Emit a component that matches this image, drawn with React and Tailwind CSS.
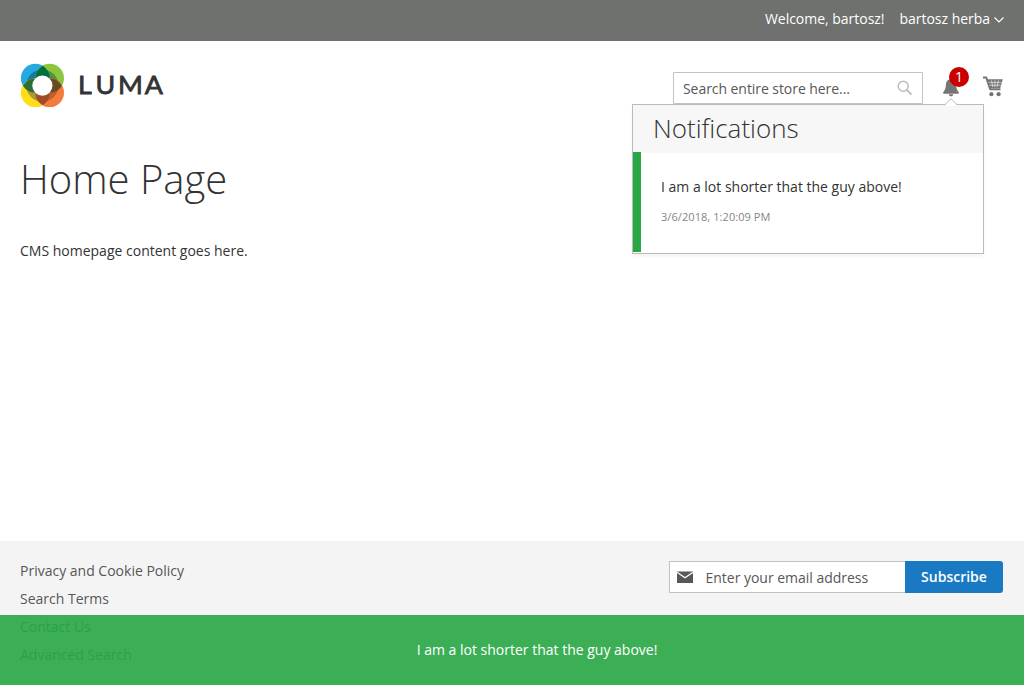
const footerLinks = ['Privacy and Cookie Policy', 'Search Terms', 'Contact Us', 'Advanced Search'];

function Logo() {
  return (
    <svg className="block" width="150" height="46" viewBox="20 62 150 46" aria-label="LUMA">
      <defs>
        <clipPath id="tl"><circle cx="35.3" cy="78.2" r="14.4" /></clipPath>
        <clipPath id="tr"><circle cx="49.6" cy="78.2" r="14.4" /></clipPath>
        <clipPath id="bl"><circle cx="35.3" cy="92.7" r="14.4" /></clipPath>
        <clipPath id="br"><circle cx="49.6" cy="92.7" r="14.4" /></clipPath>
      </defs>
      <circle cx="35.3" cy="78.2" r="14.4" fill="#26a9e0" />
      <circle cx="49.6" cy="78.2" r="14.4" fill="#8cc63e" />
      <circle cx="35.3" cy="92.7" r="14.4" fill="#ffde17" />
      <circle cx="49.6" cy="92.7" r="14.4" fill="#f47b3b" />
      <circle cx="42.4" cy="85.6" r="16.2" clipPath="url(#tl)" fill="#1478a5" />
      <circle cx="42.4" cy="85.6" r="16.2" clipPath="url(#tr)" fill="#5b8d3e" />
      <circle cx="42.4" cy="85.6" r="16.2" clipPath="url(#bl)" fill="#ab9a31" />
      <circle cx="42.4" cy="85.6" r="16.2" clipPath="url(#br)" fill="#c0602f" />
      <g strokeWidth=".5" stroke="#ffffff" strokeOpacity=".25">
        <g clipPath="url(#tl)"><circle cx="49.6" cy="78.2" r="14.4" clipPath="url(#tr)" fill="#00703c" /></g>
        <g clipPath="url(#bl)"><circle cx="49.6" cy="92.7" r="14.4" clipPath="url(#br)" fill="#a04b24" /></g>
        <g clipPath="url(#tl)"><circle cx="35.3" cy="92.7" r="14.4" clipPath="url(#bl)" fill="#2f6d35" /></g>
        <g clipPath="url(#tr)"><circle cx="49.6" cy="92.7" r="14.4" clipPath="url(#br)" fill="#664c22" /></g>
      </g>
      <circle cx="42.4" cy="85.6" r="10.1" fill="#fff" />
      <text transform="scale(1.05 1)" x="74.3 90.9 112.4 137.8" y="94.3" fontFamily="Lato, sans-serif" fontWeight="400" fontSize="25.5" fill="#333" stroke="#333" strokeWidth=".8">LUMA</text>
    </svg>
  );
}

function SearchIcon() {
  return (
    <svg width="16" height="16" viewBox="0 0 16 16" fill="none" stroke="#bcbcbc">
      <circle cx="6.2" cy="6.3" r="5" strokeWidth="1.5" />
      <path d="M9.8 9.9 14.5 14.6" strokeWidth="2" />
    </svg>
  );
}

function BellIcon() {
  return (
    <svg className="block" width="16" height="19" viewBox="0 0 16 19" fill="#757575">
      <path d="M8 0C6.9 0 6.4.7 6.4 1.6 4 2.2 3 4.2 2.9 6.8 2.8 10.5 2 12.2.4 13.9c-.7.8-.3 1.8.4 1.8h14.4c.7 0 1.1-1 .4-1.8-1.6-1.7-2.4-3.400-2.500-7.100C13 4.200 12 2.200 9.600 1.600 9.600.7 9.100 0 8 0Z" />
      <path d="M5.9 16.2h4.2c0 1.300-.9 2.100-2.100 2.100s-2.100-.8-2.100-2.100Z" />
    </svg>
  );
}

function CartIcon() {
  return (
    <svg className="block" width="20" height="21" viewBox="0 0 20 21">
      <path d="M0 1.5h3.200l4 11.800h10.300" fill="none" stroke="#757575" strokeWidth="2" />
      <path d="M4 3.300h15.800l-2.500 8.600H6.700Z" fill="#757575" />
      <path d="M5.500 6.400h13M6.200 9.200h11.500M8.500 4.300l1.300 6.900M11.900 4.300v6.900M15.400 4.300 14.100 11.200" stroke="#fff" strokeWidth=".6" fill="none" />
      <circle cx="8.4" cy="18.2" r="2.1" fill="#757575" />
      <circle cx="15.6" cy="18.2" r="2.1" fill="#757575" />
    </svg>
  );
}

function NotificationPanel() {
  return (
    <section className="absolute top-[63px] left-[632px] z-10 h-[150px] w-[352px] border border-[#bbb] bg-white shadow-[0_3px_3px_rgba(0,0,0,0.04)]">
      <svg className="absolute -top-[7px] left-[311px]" width="14" height="8" viewBox="0 0 14 8">
        <path d="M1 7 7 1l6 6v1H1Z" fill="#fff" />
        <path d="M.5 7 7 .7 13.5 7" fill="none" stroke="#bbb" />
      </svg>
      <h2 className="h-12 bg-[#f7f7f7] pl-5 text-[26px] leading-[47px] font-light">Notifications</h2>
      <article className="-mt-px h-[100px] border-l-8 border-[#28a745] pt-[25px] pl-5">
        <p className="leading-5">I am a lot shorter that the guy above!</p>
        <time className="mt-3 block text-[11px] leading-[15px] tracking-[0.07px] text-[#858585]">3/6/2018, 1:20:09 PM</time>
      </article>
    </section>
  );
}

export default function App() {
  return (
    <div className="relative flex h-[685px] w-[1024px] flex-col overflow-hidden bg-white font-['Open_Sans',sans-serif] text-[14px] text-[#333]">
      <div className="flex h-[41px] shrink-0 justify-end bg-[#6e716e] pt-[9px] pr-5 leading-5 text-white">
        <span className="tracking-[-0.02px]">Welcome, bartosz!</span>
        <button className="ml-[15px] flex h-5 items-center tracking-[-0.03px]">
          bartosz herba
          <svg className="mt-[2px] ml-1" width="10" height="6" viewBox="0 0 10 6" fill="none" stroke="#fff" strokeWidth="1.2"><path d="m.5.5 4.500 4.500L9.500.5" /></svg>
        </button>
      </div>
      <header className="relative flex h-[109px] shrink-0 items-start pt-[21px] pl-5">
        <Logo />
        <label className="mt-[10px] ml-[503px] flex h-8 w-[250px] items-center rounded-[1px] border border-[#c2c2c2] pr-[9px] pl-[9px]">
          <input className="min-w-0 flex-1 tracking-[-0.06px] outline-none placeholder:text-[#575757] placeholder:opacity-100" placeholder="Search entire store here..." />
          <SearchIcon />
        </label>
        <div className="relative mt-4 ml-5">
          <BellIcon />
          <span className="absolute -top-[11px] left-[6px] flex size-5 items-center justify-center rounded-full bg-[#c90000] text-[14px] leading-5 text-white">1</span>
        </div>
        <div className="mt-[14px] ml-6"><CartIcon /></div>
        <NotificationPanel />
      </header>
      <main className="flex-1 pl-5">
        <h1 className="mt-[7px] text-[40px] leading-[44px] font-light">Home Page</h1>
        <p className="mt-10 leading-5">CMS homepage content goes here.</p>
      </main>
      <footer className="flex h-36 shrink-0 justify-between bg-[#f4f4f4] pt-5 pr-[21px] pl-5">
        <ul className="flex flex-col gap-2 leading-5 text-[#575757]">
          {footerLinks.map((link) => <li key={link}><a>{link}</a></li>)}
        </ul>
        <form className="flex h-8">
          <label className="flex w-[236px] items-center rounded-l-[1px] border border-r-0 border-[#c2c2c2] bg-white pl-[7px]">
            <svg width="16" height="12" viewBox="0 0 16 12"><path d="M0 .5h16V12H0Z" fill="#575757" /><path d="m0 1.200 8 5.600 8-5.600" fill="none" stroke="#fff" strokeWidth="1.3" /></svg>
            <input className="ml-[12.5px] min-w-0 flex-1 tracking-[-0.02px] outline-none placeholder:text-[#575757] placeholder:opacity-100" placeholder="Enter your email address" />
          </label>
          <button type="button" className="w-[98px] rounded-r-[3px] bg-[#1979c3] pb-[2px] text-[14px] font-semibold text-white">Subscribe</button>
        </form>
      </footer>
      <div className="absolute inset-x-0 bottom-0 flex h-[70px] items-center justify-center bg-[#28a745]/90 pb-[2px] pl-[50px] text-white">
        I am a lot shorter that the guy above!
      </div>
    </div>
  );
}
